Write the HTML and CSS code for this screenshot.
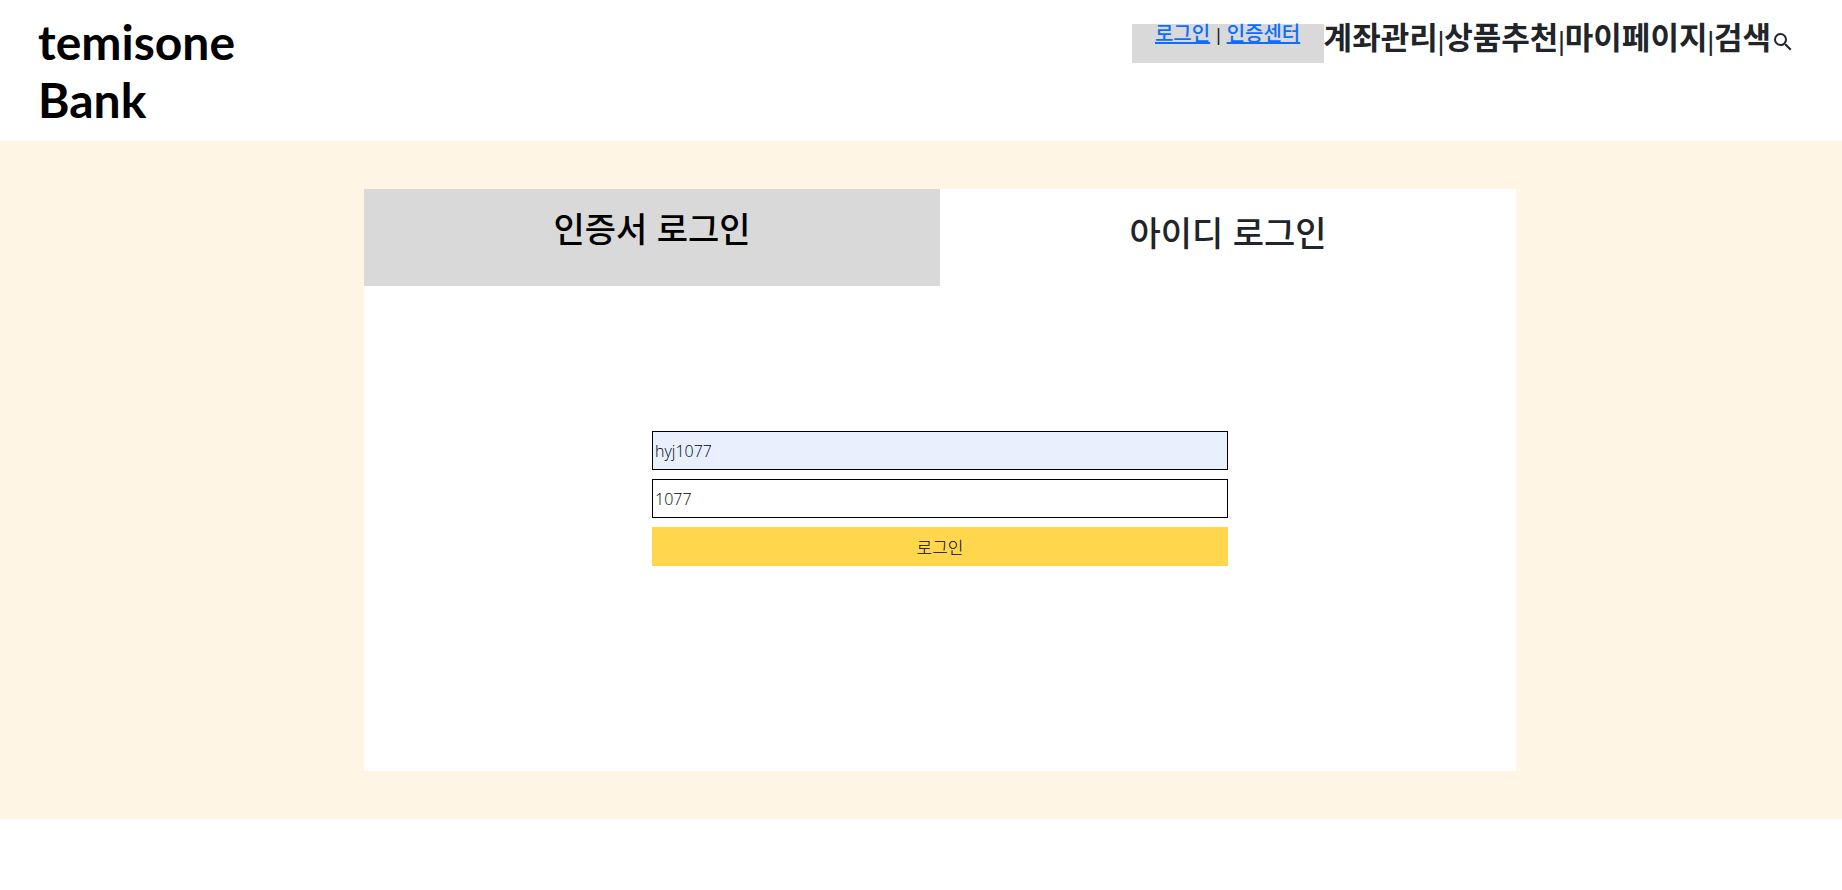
FILE: index.html
```html
<!DOCTYPE html>
<html lang="ko">
<head>
<meta charset="utf-8">
<meta name="viewport" content="width=device-width, initial-scale=1">
<title>temisone Bank</title>
<link rel="stylesheet" href="styles.css">
</head>
<body>
<header class="site-header">
  <a class="logo" href="#">temisone Bank</a>
  <div class="header-menu">
    <div class="quick-links"><a href="#">로그인</a><span class="quick-divider">|</span><a href="#">인증센터</a></div>
    <nav class="main-nav">
      <a href="#">계좌관리</a><span class="divider">|</span><a href="#">상품추천</a><span class="divider">|</span><a href="#">마이페이지</a><span class="divider">|</span><a href="#">검색</a>
      <button class="search-button" type="button" aria-label="검색">
        <svg viewBox="0 0 24 24" width="24" height="24" fill="currentColor" aria-hidden="true"><path d="M15.5 14h-.79l-.28-.27A6.471 6.471 0 0 0 16 9.5 6.5 6.5 0 1 0 9.5 16c1.61 0 3.09-.59 4.23-1.57l.27.28v.79l5 4.99L20.49 19l-4.99-5zm-6 0C7.01 14 5 11.99 5 9.5S7.01 5 9.5 5 14 7.01 14 9.5 11.99 14 9.5 14z"/></svg>
      </button>
    </nav>
  </div>
</header>
<main class="login-page">
  <section class="login-panel">
    <div class="tabs">
      <button class="tab tab-inactive" type="button">인증서 로그인</button>
      <button class="tab tab-active" type="button">아이디 로그인</button>
    </div>
    <form class="login-form">
      <input class="field field-filled" type="text" aria-label="아이디" value="hyj1077">
      <input class="field" type="text" aria-label="비밀번호" value="1077">
      <button class="submit" type="button">로그인</button>
    </form>
  </section>
</main>
</body>
</html>
```
FILE: styles.css
```css
* {
  box-sizing: border-box;
}

body {
  margin: 0;
  background: #fff;
  color: #212529;
  font-family: "Noto Sans", "Noto Sans CJK KR", sans-serif;
  font-size: 16px;
}

button,
input {
  margin: 0;
  border: 0;
  border-radius: 0;
  font-family: inherit;
}

.site-header {
  display: flex;
  justify-content: space-between;
  align-items: flex-start;
  padding: 13px 47px 12px 38px;
}

.logo {
  width: 220px;
  color: #000;
  font-family: Lato, sans-serif;
  font-size: 48px;
  font-weight: 700;
  line-height: 58px;
  text-decoration: none;
}

.header-menu {
  display: flex;
  align-items: flex-start;
  padding-top: 11px;
}

.quick-links {
  display: flex;
  justify-content: center;
  gap: 6px;
  width: 192px;
  height: 39px;
  background: #d9d9d9;
  font-family: "Noto Sans CJK KR", sans-serif;
  font-size: 20px;
  font-weight: 500;
  line-height: 18px;
}

.quick-links a {
  color: #0d6efd;
  text-decoration: underline;
}

.quick-divider {
  font-size: 15px;
  font-weight: 700;
  line-height: 22px;
}

.main-nav {
  display: flex;
  align-items: flex-start;
  font-family: "Noto Sans CJK KR", sans-serif;
  font-size: 31px;
  font-weight: 700;
  line-height: 24px;
}

.main-nav a {
  color: inherit;
  text-decoration: none;
}

.divider {
  font-size: 22px;
  font-weight: 700;
  line-height: 32px;
}

.search-button {
  display: flex;
  padding: 6px 0 0;
  background: none;
  color: inherit;
}

.login-page {
  padding: 48px 0 48px 38px;
  background: #fff5e4;
}

.login-panel {
  max-width: 1152px;
  margin: 0 auto;
  padding-bottom: 205px;
  background: #fff;
}

.tabs {
  display: grid;
  grid-template-columns: 1fr 1fr;
}

.tab {
  height: 97px;
  font-family: "Noto Sans CJK KR", sans-serif;
  font-size: 34px;
  font-weight: 500;
  line-height: 40px;
}

.tab-inactive {
  padding: 0 0 19px;
  background: #d9d9d9;
  color: #000;
}

.tab-active {
  padding: 0 0 11px;
  background: #fff;
  color: #212529;
}

.login-form {
  display: grid;
  gap: 9px;
  width: 50%;
  margin: 145px auto 0;
}

.field {
  width: 100%;
  height: 39px;
  padding: 0 2px;
  border: 1px solid #000;
  background: #fff;
  color: #000;
  font-family: "Open Sans", "Noto Sans CJK KR", sans-serif;
  font-size: 16px;
  font-weight: 300;
}

.field-filled {
  background: #e8f0fe;
}

.submit {
  height: 39px;
  padding-bottom: 2px;
  background: #ffd64c;
  color: #000;
  font-family: "Noto Sans CJK KR", sans-serif;
  font-size: 17px;
  font-weight: 300;
}
```
